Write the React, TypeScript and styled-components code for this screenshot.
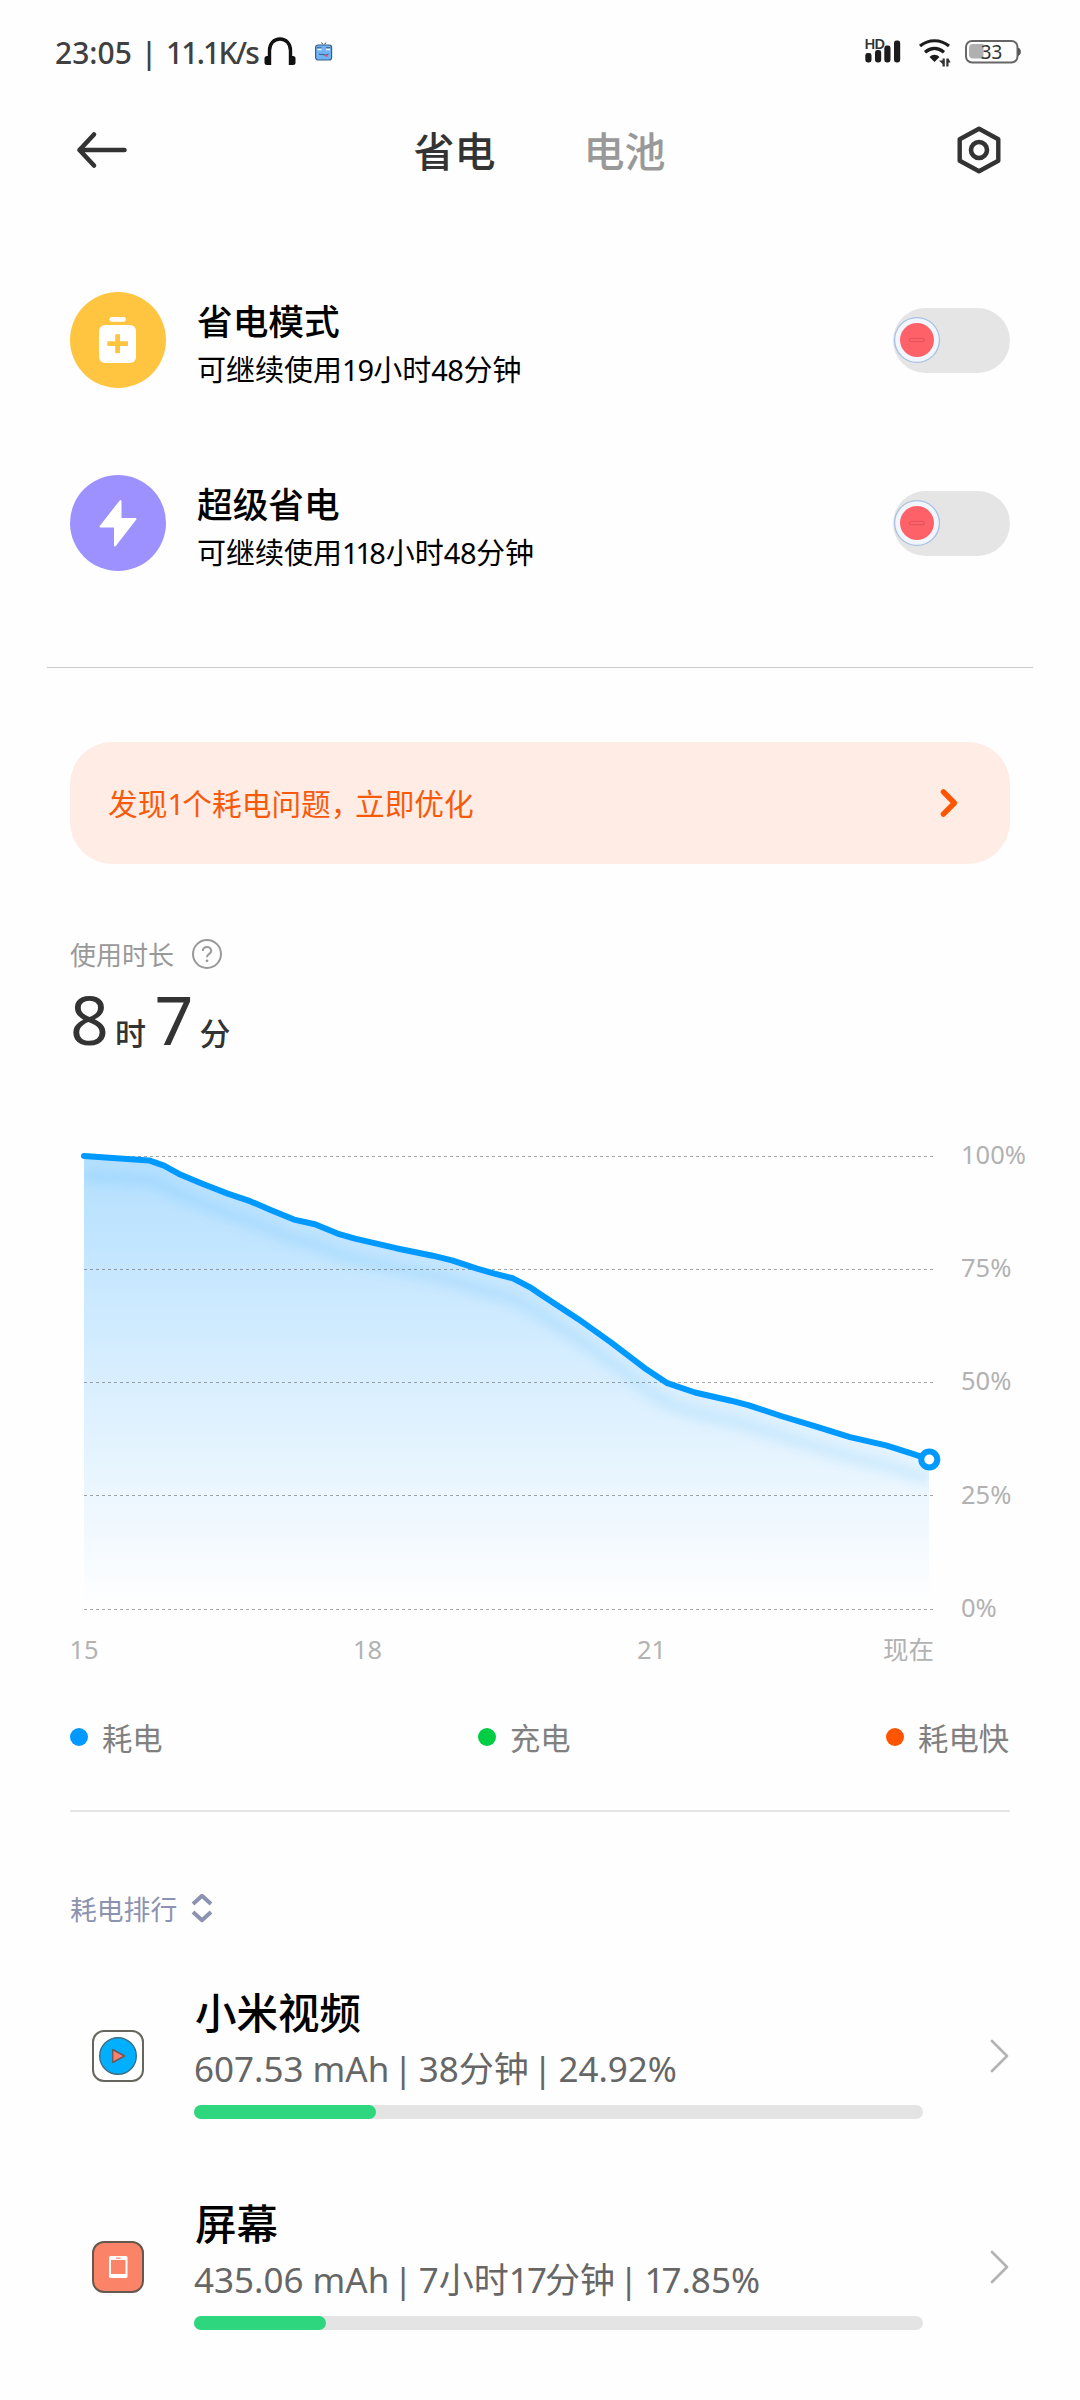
import React from 'react';
import styled, { createGlobalStyle } from 'styled-components';

const latin = `"Noto Sans", "Noto Sans CJK SC", sans-serif`;

const GlobalStyle = createGlobalStyle`
  * { box-sizing: border-box; }
  body { margin: 0; background: #fefefe; font-family: ${latin}; }
  svg { display: block; flex: none; overflow: visible; }
`;

const Screen = styled.main`
  width: 1080px;
  height: 2400px;
  overflow: hidden;
  display: flex;
  flex-direction: column;
  background: #fefefe;
`;

const T = styled.span<{ $ls?: number }>`
  letter-spacing: ${(p) => p.$ls ?? 0}px;
  white-space: pre;
`;

/* status bar */
const StatusBar = styled.header`
  height: 104px;
  padding: 0 58px 0 55px;
  display: flex;
  justify-content: space-between;
`;
const StatusLeft = styled.div`
  display: flex;
  align-items: center;
  height: 104px;
  color: #404040;
  font-size: 30px;
  font-weight: 500;
`;
const StatusTime = styled.div`
  width: 209px;
  white-space: nowrap;
`;
const StatusRight = styled.div`
  display: flex;
  align-items: center;
  height: 104px;
`;

/* title bar */
const TitleBar = styled.nav`
  height: 92px;
  padding: 0 78px 0 77px;
  display: flex;
  align-items: center;
  justify-content: space-between;
`;
const Tabs = styled.div`
  display: flex;
  gap: 88px;
  margin-right: 4px;
  padding-top: 2px;
`;
const Tab = styled.button<{ $active?: boolean }>`
  border: 0;
  padding: 0;
  background: none;
  font: 500 41px/60px ${latin};
  color: ${(p) => (p.$active ? '#333' : '#999')};
`;

/* modes */
const Modes = styled.section`
  padding: 96px 70px 0;
  display: flex;
  flex-direction: column;
  gap: 87px;
`;
const ModeRow = styled.div`
  display: flex;
  align-items: center;
  height: 96px;
`;
const ModeIcon = styled.div<{ $bg: string }>`
  width: 96px;
  height: 96px;
  border-radius: 50%;
  background: ${(p) => p.$bg};
`;
const ModeText = styled.div`
  flex: 1;
  padding: 12px 0 0 31px;
  color: #000;
`;
const ModeTitle = styled.div`
  font-size: 35.7px;
  font-weight: 500;
  line-height: 48px;
`;
const ModeSub = styled.div`
  font-size: 29px;
  line-height: 50px;
`;
const Track = styled.div`
  width: 117px;
  height: 65px;
  border-radius: 33px;
  background: #e5e5e5;
  display: flex;
  align-items: center;
  padding-left: 1px;
`;

const Divider = styled.hr<{ $inset: number; $top: number; $thin?: boolean }>`
  margin: ${(p) => p.$top}px ${(p) => p.$inset}px 0;
  border: 0;
  height: ${(p) => (p.$thin ? 1 : 2)}px;
  flex: none;
  background: ${(p) => (p.$thin ? '#cbcbcb' : '#e5e5e5')};
`;

const Banner = styled.div`
  margin: 74px 70px 0;
  height: 122px;
  flex: none;
  border-radius: 42px;
  background: #ffede5;
  color: #f85a0c;
  font-size: 29.7px;
  display: flex;
  align-items: center;
  justify-content: space-between;
  padding: 0 51px 0 38px;
`;
const BannerText = styled.span`
  padding-bottom: 2px;
`;

const Usage = styled.section`
  padding: 70px 70px 0;
  height: 202px;
  flex: none;
`;
const UsageLabel = styled.div`
  display: flex;
  align-items: center;
  gap: 18px;
  height: 40px;
  color: #999;
  font-size: 26px;
`;
const Duration = styled.div`
  display: flex;
  align-items: baseline;
  color: #333;
  line-height: 90px;
`;
const Big = styled.span<{ $w: number }>`
  font-size: 68px;
  width: ${(p) => p.$w}px;
`;
const Unit = styled.span<{ $w: number }>`
  font-size: 31px;
  font-weight: 500;
  width: ${(p) => p.$w}px;
`;

/* chart */
const ChartRow = styled.section`
  display: flex;
  height: 557px;
  margin-top: 54px;
  flex: none;
`;
const YAxis = styled.div`
  display: flex;
  flex-direction: column;
  padding-left: 27px;
  color: #b2b2b2;
  font-size: 25.5px;
`;
const YLabel = styled.span`
  height: 113.2px;
  flex: none;
  line-height: 68px;
`;
const PlotColumn = styled.div`
  width: 934px;
`;
const XAxis = styled.div`
  display: grid;
  grid-template-columns: 283.5px 284px 1fr auto;
  padding-left: 69.5px;
  color: #b2b2b2;
  font-size: 25.5px;
  line-height: 35px;
`;

const Legend = styled.div`
  display: flex;
  justify-content: space-between;
  padding: 0 71px 0 70px;
  height: 50px;
  flex: none;
  margin-top: 35px;
`;
const LegendItem = styled.div<{ $dot: string }>`
  display: flex;
  align-items: center;
  gap: 14px;
  font-size: 30.3px;
  color: #808080;
  &::before {
    content: '';
    width: 18px;
    height: 18px;
    border-radius: 50%;
    background: ${(p) => p.$dot};
  }
`;

const RankHeader = styled.div`
  display: flex;
  align-items: center;
  gap: 14px;
  height: 40px;
  flex: none;
  margin: 76px 70px 22.5px;
  color: #8c93b0;
  font-size: 26.8px;
`;

const AppRow = styled.article`
  display: flex;
  align-items: center;
  height: 211px;
  flex: none;
  padding: 0 71px 0 92px;
`;
const AppBody = styled.div`
  width: 729px;
  margin: 0 67px 0 50px;
  padding-bottom: 9px;
`;
const AppName = styled.div`
  padding-left: 1px;
  font-size: 41.5px;
  font-weight: 500;
  line-height: 56px;
  color: #000;
`;
const AppMeta = styled.div`
  font-size: 35px;
  line-height: 56px;
  color: #666;
`;
const Bar = styled.div`
  margin-top: 8px;
  height: 14px;
  border-radius: 7px;
  background: #e4e4e4;
`;
const Fill = styled.div`
  height: 14px;
  border-radius: 7px;
  background: #2ed67e;
`;

const Headphones = () => (
  <svg width="32" height="30" viewBox="0 0 32 30">
    <path d="M5.5 28V13.5C5.5 6.5 10 2 16 2S26.500 6.500 26.500 13.500V28" fill="none" stroke="#111" strokeWidth="3.400" />
    <rect x="0.500" y="19" width="6.500" height="9" rx="2.500" fill="#111" />
    <rect x="25" y="19" width="6.500" height="9" rx="2.500" fill="#111" />
  </svg>
);

const RobotSvg = styled.svg`
  margin: 0 0 2px 19px;
`;
const Robot = () => (
  <RobotSvg width="18" height="19" viewBox="0 0 18 19">
    <path d="M6.500 0.500L8 2.500M11 0.500L9.500 2.500" stroke="#345" strokeWidth="1" />
    <rect x="0.600" y="3" width="16" height="15" rx="2.500" fill="#6eb4f5" stroke="#3b5f88" strokeWidth="1.200" />
    <path d="M2.500 7.300H6.500M11 7.300H15" stroke="#f2f8fe" strokeWidth="1.800" />
    <path d="M2 5.800H6.500M11 5.800H15.500M4 12C5.500 13 7 12 8 12.500S11 13.500 13.500 12" stroke="#2f4a6b" strokeWidth="0.900" fill="none" />
    <path d="M9 13L12.500 12.500V15L10.500 14.600Z" fill="#e0506a" />
  </RobotSvg>
);

const Signal = () => (
  <svg width="36" height="30" viewBox="0 0 36 30">
    <g fill="#1c1c1c">
      <rect x="0.300" y="16" width="6.200" height="9.500" rx="2.400" />
      <rect x="10" y="13" width="6.200" height="12.500" rx="2.400" />
      <rect x="19.300" y="8.500" width="6.200" height="17" rx="2.400" />
      <rect x="29" y="3.500" width="6.200" height="22" rx="2.400" />
    </g>
    <text x="-0.800" y="11.500" fontSize="15" fontWeight="600" fill="#333" stroke="#fefefe" strokeWidth="1.500" paintOrder="stroke" textLength="21">HD</text>
  </svg>
);

const WifiSvg = styled.svg`
  margin-left: 18.5px;
`;
const Wifi = () => (
  <WifiSvg width="32" height="30" viewBox="0 0 32 30">
    <g fill="none" stroke="#1c1c1c" strokeWidth="3.200">
      <path d="M1 9C9.500 2 21.500 2 30 9" />
      <path d="M6 15.200C12 10.200 19 10.200 25 15.200" />
    </g>
    <path d="M10.500 20C13.500 17 17.500 17 20.500 20L15.500 25Z" fill="#1c1c1c" />
    <path d="M23.500 21.500H25.800V29.500H23.500V27L20 23.500H23.500ZM27.300 21.500H29.500L31.500 25.500H29.500V29.500H27.300Z" fill="#333" />
  </WifiSvg>
);

const BatterySvg = styled.svg`
  margin: 0 1px 0 14px;
`;
const Battery = () => (
  <BatterySvg width="56" height="24" viewBox="0 0 56 24">
    <rect x="1" y="1" width="51.500" height="21.500" rx="6" fill="none" stroke="#666" strokeWidth="2" />
    <path d="M53.500 8C56 10 56 13.500 53.500 15.500Z" fill="#555" stroke="#555" />
    <path d="M8 4H18.500V18.500H8A4 4 0 0 1 4 14.500V8A4 4 0 0 1 8 4Z" fill="#b0b0b0" />
    <text x="15.700" y="19" fontSize="20.500" fill="#333" textLength="21.500" lengthAdjust="spacingAndGlyphs">33</text>
  </BatterySvg>
);

const Back = () => (
  <svg width="50" height="36" viewBox="0 0 50 36">
    <path d="M17 2.500L2.500 18L17 33.500M2.500 18H47.500" fill="none" stroke="#333" strokeWidth="4.600" strokeLinecap="round" strokeLinejoin="round" />
  </svg>
);

const Settings = () => (
  <svg width="46" height="48" viewBox="0 0 46 48">
    <path d="M23 2.700L42.300 13.200V34.800L23 45.300L3.700 34.800V13.200Z" fill="none" stroke="#333" strokeWidth="4.400" strokeLinejoin="round" />
    <circle cx="23" cy="24" r="8" fill="none" stroke="#333" strokeWidth="4.600" />
  </svg>
);

const SaverGlyph = () => (
  <svg width="96" height="96" viewBox="0 0 96 96">
    <rect x="39.500" y="25" width="16.500" height="4.800" rx="2.400" fill="#fff" />
    <rect x="29" y="33" width="37" height="38" rx="6" fill="#fff" />
    <path d="M47.600 42.300V61M37.300 51.600H58" stroke="#ffc440" strokeWidth="4.800" />
  </svg>
);

const BoltGlyph = () => (
  <svg width="96" height="96" viewBox="0 0 96 96">
    <path d="M50.500 26L30.500 51.500H45V70.500L65.500 44H50.500Z" fill="#fff" stroke="#fff" strokeWidth="2" strokeLinejoin="round" />
  </svg>
);

const Switch = () => (
  <Track>
    <svg width="46" height="46" viewBox="0 0 46 46">
      <circle cx="23" cy="23" r="22.400" fill="#f1f5fd" stroke="#a9c1e2" strokeWidth="1.300" />
      <circle cx="23" cy="23" r="17" fill="#ff6169" />
      <rect x="15.500" y="21.300" width="15" height="3.400" rx="1.700" fill="none" stroke="#e0535c" strokeWidth="1" />
    </svg>
  </Track>
);

const points: [number, number][] = [
  [84, 35.9], [149, 40.4], [164, 45.700], [179, 53.900], [203.600, 64.300], [227.700, 73.600], [250.700, 81.400],
  [270.700, 90], [294, 99.600], [315, 104.300], [337.500, 113.600], [355, 118.600], [396, 128.200], [432.600, 135.700],
  [452, 140.400], [477, 148.600], [494.500, 153.600], [512.500, 158.200], [529.700, 167.100], [540, 174],
  [578, 198.900], [610.600, 222.100], [646.700, 249.600], [667.400, 263.200], [695, 272.500], [731, 280.700],
  [749, 285.400], [781, 296], [815.500, 306.400], [850, 317.100], [886, 325.400], [912, 333.700], [929, 339.300],
];
const line = 'M' + points.map(([x, y]) => `${x} ${y}`).join('L');
const area = `${line}V488H84Z`;

const Chart = () => (
  <svg width="934" height="512" viewBox="0 0 934 512">
    <defs>
      <linearGradient id="area" gradientUnits="userSpaceOnUse" x1="0" y1="34" x2="0" y2="484">
        <stop offset="0" stopColor="#b3dfff" />
        <stop offset="1" stopColor="#fefefe" />
      </linearGradient>
      <clipPath id="under"><path d={area} /></clipPath>
      <filter id="soft" x="-10%" y="-20%" width="120%" height="140%"><feGaussianBlur stdDeviation="5.500" /></filter>
    </defs>
    <path d={area} fill="url(#area)" />
    <g clipPath="url(#under)">
      <path d={line} transform="translate(0 20)" fill="none" stroke="#0090e8" strokeOpacity="0.100" strokeWidth="13" filter="url(#soft)" />
    </g>
    {[36, 149, 262, 375, 489].map((y) => (
      <path key={y} d={`M84 ${y + 0.5}H933`} stroke="#4d4d4d" strokeOpacity="0.500" strokeWidth="1" strokeDasharray="3 3" />
    ))}
    <path d={line} fill="none" stroke="#0099ff" strokeWidth="6" strokeLinecap="round" strokeLinejoin="round" />
    <circle cx="929.300" cy="339.500" r="8" fill="#fff" stroke="#0099ff" strokeWidth="6" />
  </svg>
);

const VideoIcon = () => (
  <svg width="52" height="52" viewBox="0 0 52 52">
    <rect x="1" y="1" width="50" height="50" rx="11" fill="#fff" stroke="#66665e" strokeWidth="2" />
    <circle cx="26" cy="26" r="18.300" fill="#00b0ff" stroke="#3c6f85" strokeWidth="1.400" />
    <path d="M20.700 19.500V32.500L32.500 26Z" fill="#f9806f" stroke="#6a5a5c" strokeWidth="1.500" strokeLinejoin="round" />
  </svg>
);

const ScreenIcon = () => (
  <svg width="52" height="52" viewBox="0 0 52 52">
    <rect x="1" y="1" width="50" height="50" rx="11" fill="#fb8368" stroke="#66584e" strokeWidth="2" />
    <rect x="17" y="15" width="18.500" height="22" rx="1.500" fill="#fff" />
    <rect x="19" y="19" width="14.500" height="14" fill="#fb8368" />
    <path d="M24 17.200H28.500" stroke="#fb8368" strokeWidth="1.200" />
  </svg>
);

const Chevron = () => (
  <svg width="19" height="34" viewBox="0 0 19 34">
    <path d="M2 2L17 17L2 32" fill="none" stroke="#b3b3b3" strokeWidth="2.700" strokeLinecap="round" strokeLinejoin="round" />
  </svg>
);

const Sep = () => (
  <>
    <T $ls={-5}> </T>
    <T $ls={-3}>|</T>
    <T> </T>
  </>
);

export default function App() {
  return (
    <Screen>
      <GlobalStyle />
      <StatusBar>
        <StatusLeft>
          <StatusTime>23:05<T $ls={1}> </T>|<T $ls={1}> </T><T $ls={-1.8}>11.1K/s</T></StatusTime>
          <Headphones />
          <Robot />
        </StatusLeft>
        <StatusRight>
          <Signal />
          <Wifi />
          <Battery />
        </StatusRight>
      </StatusBar>
      <TitleBar>
        <Back />
        <Tabs>
          <Tab $active>省电</Tab>
          <Tab>电池</Tab>
        </Tabs>
        <Settings />
      </TitleBar>

      <Modes>
        <ModeRow>
          <ModeIcon $bg="#ffc440"><SaverGlyph /></ModeIcon>
          <ModeText>
            <ModeTitle>省电模式</ModeTitle>
            <ModeSub>可继续使用<T $ls={-1}>19</T>小时<T $ls={-0.5}>48</T>分钟</ModeSub>
          </ModeText>
          <Switch />
        </ModeRow>
        <ModeRow>
          <ModeIcon $bg="#9d91ff"><BoltGlyph /></ModeIcon>
          <ModeText>
            <ModeTitle>超级省电</ModeTitle>
            <ModeSub>可继续使用<T $ls={-3}>11</T>8小时<T $ls={-0.5}>48</T>分钟</ModeSub>
          </ModeText>
          <Switch />
        </ModeRow>
      </Modes>
      <Divider $inset={47} $top={96} $thin />

      <Banner>
        <BannerText>发现<T $ls={-2}>1</T>个耗电问题<T $ls={-5.5}>，</T>立即优化</BannerText>
        <svg width="20" height="28" viewBox="0 0 20 28">
          <path d="M4.400 2.900L15.400 14L4.400 25.100" fill="none" stroke="#ff5500" strokeWidth="5.400" strokeLinecap="round" strokeLinejoin="round" />
        </svg>
      </Banner>

      <Usage>
        <UsageLabel>
          使用时长
          <svg width="30" height="30" viewBox="0 0 30 30">
            <circle cx="15" cy="15" r="14" fill="none" stroke="#999" strokeWidth="2" />
            <path d="M10.800 12C10.800 6.800 19.200 6.800 19.200 12C19.200 15 15 14.800 15 18.200" fill="none" stroke="#999" strokeWidth="2" />
            <circle cx="15" cy="21.800" r="1.400" fill="#999" />
          </svg>
        </UsageLabel>
        <Duration>
          <Big $w={45}>8</Big><Unit $w={39.5}>时</Unit><Big $w={45}>7</Big><Unit $w={32}>分</Unit>
        </Duration>
      </Usage>

      <ChartRow>
        <PlotColumn>
          <Chart />
          <XAxis><span>15</span><span>18</span><span>21</span><span>现在</span></XAxis>
        </PlotColumn>
        <YAxis>
          {['100%', '75%', '50%', '25%', '0%'].map((v) => <YLabel key={v}>{v}</YLabel>)}
        </YAxis>
      </ChartRow>

      <Legend>
        <LegendItem $dot="#0099ff">耗电</LegendItem>
        <LegendItem $dot="#00cc44">充电</LegendItem>
        <LegendItem $dot="#ff5500">耗电快</LegendItem>
      </Legend>
      <Divider $inset={70} $top={48} />

      <RankHeader>
        耗电排行
        <svg width="22" height="30" viewBox="0 0 22 30">
          <path d="M2 11L11 2.800L20 11M2 19L11 27.200L20 19" fill="none" stroke="#8c93b0" strokeWidth="4" strokeLinejoin="round" />
        </svg>
      </RankHeader>

      <AppRow>
        <VideoIcon />
        <AppBody>
          <AppName>小米视频</AppName>
          <AppMeta>607.53 mAh<Sep />38分钟<Sep />24.92%</AppMeta>
          <Bar><Fill style={{ width: '25%' }} /></Bar>
        </AppBody>
        <Chevron />
      </AppRow>
      <AppRow>
        <ScreenIcon />
        <AppBody>
          <AppName>屏幕</AppName>
          <AppMeta>435.06 mAh<Sep />7小时<T $ls={-2}>17</T>分钟<Sep /><T $ls={-3}>1</T>7.85%</AppMeta>
          <Bar><Fill style={{ width: '18.1%' }} /></Bar>
        </AppBody>
        <Chevron />
      </AppRow>
    </Screen>
  );
}
